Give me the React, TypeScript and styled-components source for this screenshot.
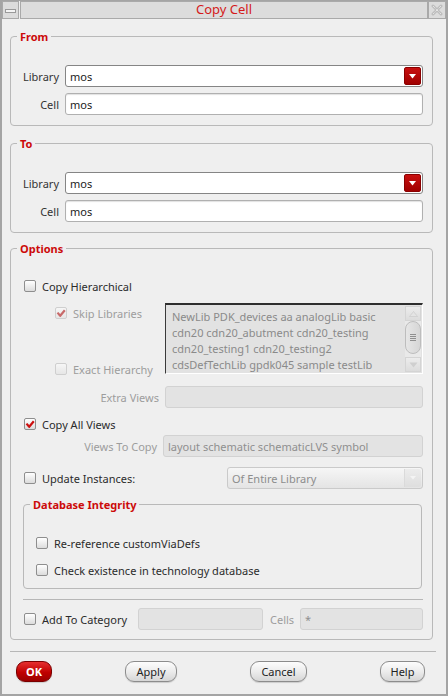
import React from 'react';
import styled, { createGlobalStyle } from 'styled-components';

const GlobalStyle = createGlobalStyle`
  * { box-sizing: border-box; }
  html, body { margin: 0; padding: 0; background: #efefef; }
  body {
    font-family: "Noto Sans", "Open Sans", "DejaVu Sans", sans-serif;
    font-size: 11px;
    color: #2b2b2b;
  }
`;

const Window = styled.div`
  width: 448px;
  height: 696px;
  display: flex;
  flex-direction: column;
  background: #efefef;
  border: solid #a4a4a4;
  border-width: 1px 2px 2px 2px;
  overflow: hidden;
`;

const TitleBar = styled.div`
  display: flex;
  height: 18px;
  flex: none;
`;

const TitleButton = styled.div<{ $w: number }>`
  width: ${p => p.$w}px;
  height: 18px;
  flex: none;
  background: #dcdcdc;
  border: 1px solid #a9a9a9;
  display: flex;
  align-items: center;
  justify-content: center;
`;

const MinBar = styled.div`
  width: 11px;
  height: 4px;
  border: 1px solid #9a9a9a;
  background: #f4f4f4;
  margin-top: 1px;
`;

const TitleText = styled.div`
  flex: 1;
  margin-left: 1px;
  height: 18px;
  background: #dcdcdc;
  border: 1px solid #a9a9a9;
  color: #d41a1a;
  font-size: 13px;
  line-height: 15px;
  text-align: center;
`;

const Body = styled.div`
  flex: 1;
  display: flex;
  flex-direction: column;
  padding: 11px 13px 0 8px;
`;

const Group = styled.fieldset<{ $pl: number; $mt?: number; $pt: number; $pb: number }>`
  margin: ${p => p.$mt ?? 0}px 0 0 0;
  min-width: 0;
  padding: ${p => p.$pt}px 9px ${p => p.$pb}px ${p => p.$pl}px;
  border: 1px solid #b9b9b9;
  border-radius: 4px;
  & > legend {
    margin-left: ${p => 6 - p.$pl}px;
  }
`;

const SubGroup = styled(Group)`
  margin-left: -1px;
  width: 399px;
`;

const Legend = styled.legend`
  padding: 0 3px;
  font-weight: bold;
  font-size: 11px;
  line-height: 13px;
  color: #cc0a0a;
`;

const FormGrid = styled.div`
  display: grid;
  grid-template-columns: 38px 1fr;
  column-gap: 6px;
  row-gap: 6px;
  align-items: center;
`;

const Label = styled.span<{ $disabled?: boolean; $w?: number }>`
  color: ${p => (p.$disabled ? '#9d9d9d' : '#333')};
  text-align: right;
  white-space: nowrap;
  ${p => (p.$w ? `width: ${p.$w}px; flex: none;` : '')}
`;

const Field = styled.div<{ $disabled?: boolean; $w?: number }>`
  height: 22px;
  display: flex;
  align-items: center;
  padding: 0 4px;
  border-radius: 3px;
  white-space: nowrap;
  overflow: hidden;
  ${p => (p.$w ? `width: ${p.$w}px; flex: none;` : 'flex: 1; min-width: 0;')}
  background: ${p => (p.$disabled ? '#e3e3e3' : '#ffffff')};
  border: 1px solid ${p => (p.$disabled ? '#d2d2d2' : '#b0b0b0')};
  color: ${p => (p.$disabled ? '#8f8f8f' : '#222')};
  box-shadow: ${p => (p.$disabled ? 'none' : 'inset 0 1px 1px rgba(0,0,0,0.12)')};
`;

const SelectField = styled.div`
  height: 22px;
  display: flex;
  align-items: center;
  padding: 0 1px 0 4px;
  border-radius: 3px;
  background: #fff;
  border: 1px solid #858585;
  color: #222;
`;

const SelectText = styled.span`
  flex: 1;
`;

const RedArrow = styled.div`
  width: 17px;
  height: 18px;
  border-radius: 2px;
  background: linear-gradient(#c81010, #a00000);
  border: 1px solid #8a0000;
  display: flex;
  align-items: center;
  justify-content: center;
`;

const OptionsBody = styled.div`
  display: flex;
  flex-direction: column;
`;

const Row = styled.div<{ $mt?: number; $h?: number }>`
  display: flex;
  align-items: center;
  margin-top: ${p => p.$mt ?? 0}px;
  height: ${p => p.$h ?? 16}px;
  flex: none;
`;

const CheckLabel = styled.label<{ $disabled?: boolean; $w?: number }>`
  display: flex;
  align-items: center;
  gap: 6px;
  white-space: nowrap;
  color: ${p => (p.$disabled ? '#9d9d9d' : '#2b2b2b')};
  ${p => (p.$w ? `width: ${p.$w}px; flex: none;` : '')}
`;

const Box = styled.span<{ $disabled?: boolean }>`
  width: 12px;
  height: 12px;
  flex: none;
  border-radius: 2px;
  border: 1px solid ${p => (p.$disabled ? '#cfcfcf' : '#8e8e8e')};
  background: ${p =>
    p.$disabled ? 'linear-gradient(#f6f6f6, #e6e6e6)' : 'linear-gradient(#ffffff, #dcdcdc)'};
  display: flex;
  align-items: center;
  justify-content: center;
`;

const HierBlock = styled.div`
  display: flex;
  margin-top: 9px;
  height: 71px;
`;

const HierLeft = styled.div`
  width: 141px;
  flex: none;
  padding: 2px 0 0 31px;
  display: flex;
  flex-direction: column;
  justify-content: space-between;
`;

const ListBox = styled.div`
  flex: 1;
  display: flex;
  background: #e2e2e2;
  border: 1px solid #ffffff;
  border-top: 2px solid #2e2e2e;
  border-left: 1px solid #3a3a3a;
`;

const ListText = styled.div`
  flex: 1;
  padding: 4px 0 0 6px;
  line-height: 16px;
  color: #8a8a8a;
  white-space: nowrap;
  overflow: hidden;
`;

const Scrollbar = styled.div`
  width: 16px;
  flex: none;
  margin: 1px 1px 1px 0;
  display: flex;
  flex-direction: column;
  background: #e9e9e9;
`;

const ScrollBtn = styled.div`
  height: 15px;
  flex: none;
  background: linear-gradient(#ececec, #dcdcdc);
  border: 1px solid #d4d4d4;
  display: flex;
  align-items: center;
  justify-content: center;
`;

const Thumb = styled.div`
  flex: 1;
  margin: 0 0 3px;
  border: 1px solid #bdbdbd;
  border-radius: 8px;
  background: linear-gradient(90deg, #e6e6e6, #d6d6d6);
  display: flex;
  align-items: center;
  justify-content: center;
`;

const Grip = styled.div`
  width: 6px;
  height: 7px;
  background: repeating-linear-gradient(#8f8f8f 0 1px, transparent 1px 2px);
`;

const DisabledSelect = styled.div`
  width: 196px;
  margin-left: auto;
  height: 22px;
  display: flex;
  align-items: center;
  padding-left: 4px;
  border-radius: 3px;
  border: 1px solid #cacaca;
  background: linear-gradient(#f6f6f6, #e4e4e4);
  color: #8d8d8d;
`;

const SelectArrowBox = styled.div`
  width: 17px;
  height: 18px;
  margin-left: auto;
  margin-right: 1px;
  border-left: 1px solid #dadada;
  background: linear-gradient(#ececec, #dedede);
  border-radius: 0 2px 2px 0;
  display: flex;
  align-items: center;
  justify-content: center;
`;

const Separator = styled.div<{ $mt: number; $ml?: number; $mr?: number }>`
  height: 1px;
  flex: none;
  background: #b7b7b7;
  margin: ${p => p.$mt}px ${p => p.$mr ?? 0}px 0 ${p => p.$ml ?? 0}px;
`;

const ButtonRow = styled.div`
  display: flex;
  justify-content: space-between;
  margin-top: 9px;
  padding: 0 8px 0 6px;
`;

const Button = styled.button<{ $w: number; $primary?: boolean }>`
  width: ${p => p.$w}px;
  height: 21px;
  padding: 0;
  border-radius: 9px;
  font-family: inherit;
  font-size: 11px;
  line-height: 1;
  border: 1px solid ${p => (p.$primary ? '#7a0000' : '#8c8c8c')};
  background: ${p =>
    p.$primary
      ? 'linear-gradient(#e63030, #c00000 55%, #9a0000)'
      : 'linear-gradient(#fdfdfd, #ececec 50%, #d6d6d6)'};
  color: ${p => (p.$primary ? '#fff' : '#222')};
  font-weight: ${p => (p.$primary ? 'bold' : 'normal')};
  box-shadow: 0 1px 1px rgba(0, 0, 0, 0.15);
`;

const Check = ({ checked, disabled }: { checked?: boolean; disabled?: boolean }) => (
  <Box $disabled={disabled}>
    {checked && (
      <svg width="10" height="10" viewBox="0 0 10 10">
        <path
          d="M1.5 4.6 L4.2 7.8 L8.8 2.2"
          fill="none"
          stroke={disabled ? '#c86a6a' : '#cc1010'}
          strokeWidth="2.2"
          strokeLinejoin="round"
        />
      </svg>
    )}
  </Box>
);

const Tri = ({ color, up }: { color: string; up?: boolean }) => (
  <svg width="9" height="6" viewBox="0 0 9 6">
    <path d={up ? 'M0.5 5.5 L4.5 0.5 L8.5 5.5 Z' : 'M0.5 0.5 L4.5 5.5 L8.5 0.5 Z'} fill={color} stroke={up ? '#c8c8c8' : 'none'} strokeWidth="0.6" />
  </svg>
);

const CheckItem = ({
  label,
  checked,
  disabled,
  w,
}: {
  label: string;
  checked?: boolean;
  disabled?: boolean;
  w?: number;
}) => (
  <CheckLabel $disabled={disabled} $w={w}>
    <Check checked={checked} disabled={disabled} />
    {label}
  </CheckLabel>
);

const LibSelect = ({ value }: { value: string }) => (
  <SelectField>
    <SelectText>{value}</SelectText>
    <RedArrow>
      <svg width="7" height="5" viewBox="0 0 7 5">
        <path d="M0 0 L7 0 L3.5 4.5 Z" fill="#fff" />
      </svg>
    </RedArrow>
  </SelectField>
);

export default function App() {
  return (
    <>
      <GlobalStyle />
      <Window>
        <TitleBar>
          <TitleButton $w={17}>
            <MinBar />
          </TitleButton>
          <TitleText>Copy Cell</TitleText>
          <TitleButton $w={18}>
            <svg width="12" height="12" viewBox="0 0 12 12">
              <path d="M2 2 L10 10 M10 2 L2 10" stroke="#bdbdbd" strokeWidth="3" strokeLinecap="round" />
              <path d="M2 2 L10 10 M10 2 L2 10" stroke="#f6f6f6" strokeWidth="1" strokeDasharray="1 1" />
            </svg>
          </TitleButton>
        </TitleBar>
        <Body>
          <Group $pl={10} $pt={22} $pb={10}>
            <Legend>From</Legend>
            <FormGrid>
              <Label>Library</Label>
              <LibSelect value="mos" />
              <Label>Cell</Label>
              <Field>mos</Field>
            </FormGrid>
          </Group>

          <Group $pl={10} $pt={22} $pb={10} $mt={11}>
            <Legend>To</Legend>
            <FormGrid>
              <Label>Library</Label>
              <LibSelect value="mos" />
              <Label>Cell</Label>
              <Field>mos</Field>
            </FormGrid>
          </Group>

          <Group $pl={13} $pt={23} $pb={9} $mt={9}>
            <Legend>Options</Legend>
            <OptionsBody>
              <Row>
                <CheckItem label="Copy Hierarchical" />
              </Row>
              <HierBlock>
                <HierLeft>
                  <Row>
                    <CheckItem label="Skip Libraries" checked disabled />
                  </Row>
                  <Row style={{ marginBottom: -3 }}>
                    <CheckItem label="Exact Hierarchy" disabled />
                  </Row>
                </HierLeft>
                <ListBox>
                  <ListText>
                    NewLib PDK_devices aa analogLib basic
                    <br />
                    cdn20 cdn20_abutment cdn20_testing
                    <br />
                    cdn20_testing1 cdn20_testing2
                    <br />
                    cdsDefTechLib gpdk045 sample testLib
                  </ListText>
                  <Scrollbar>
                    <ScrollBtn>
                      <Tri color="#e4e4e4" up />
                    </ScrollBtn>
                    <Thumb>
                      <Grip />
                    </Thumb>
                    <ScrollBtn>
                      <Tri color="#cfcfcf" />
                    </ScrollBtn>
                  </Scrollbar>
                </ListBox>
              </HierBlock>
              <Row $mt={12} $h={22}>
                <Label $disabled $w={135}>Extra Views</Label>
                <Field $disabled style={{ marginLeft: 6 }} />
              </Row>
              <Row $mt={8}>
                <CheckItem label="Copy All Views" checked />
              </Row>
              <Row $mt={3} $h={22}>
                <Label $disabled $w={133}>Views To Copy</Label>
                <Field $disabled style={{ marginLeft: 6 }}>
                  layout schematic schematicLVS symbol
                </Field>
              </Row>
              <Row $mt={10} $h={22}>
                <CheckItem label="Update Instances:" />
                <DisabledSelect>
                  Of Entire Library
                  <SelectArrowBox>
                    <svg width="6" height="4" viewBox="0 0 6 4">
                      <path d="M0 0 L6 0 L3 3.5 Z" fill="#f4f4f4" />
                    </svg>
                  </SelectArrowBox>
                </DisabledSelect>
              </Row>
              <SubGroup $pl={12} $pt={24} $pb={10} $mt={9}>
                <Legend>Database Integrity</Legend>
                <Row>
                  <CheckItem label="Re-reference customViaDefs" />
                </Row>
                <Row $mt={11}>
                  <CheckItem label="Check existence in technology database" />
                </Row>
              </SubGroup>
              <Separator $mt={10} $ml={-1} />
              <Row $mt={8} $h={22}>
                <CheckItem label="Add To Category" w={114} />
                <Field $disabled $w={125} />
                <Label $disabled style={{ margin: '0 6px 0 7px' }}>Cells</Label>
                <Field $disabled>*</Field>
              </Row>
            </OptionsBody>
          </Group>

          <Separator $mt={11} $ml={0} $mr={-3} />
          <ButtonRow>
            <Button $w={36} $primary>OK</Button>
            <Button $w={52}>Apply</Button>
            <Button $w={57}>Cancel</Button>
            <Button $w={45}>Help</Button>
          </ButtonRow>
        </Body>
      </Window>
    </>
  );
}
